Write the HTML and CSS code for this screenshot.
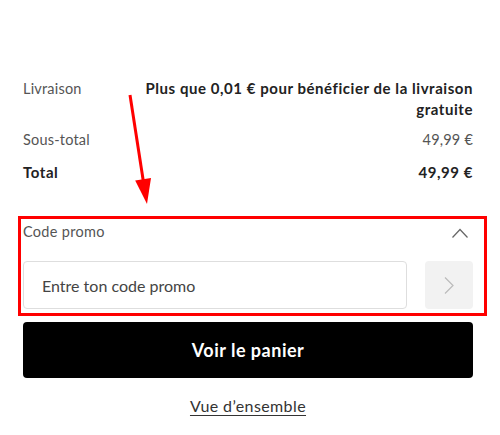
FILE: index.html
```html
<!DOCTYPE html>
<html lang="fr">
<head>
<meta charset="utf-8">
<title>Panier</title>
<link rel="stylesheet" href="styles.css">
</head>
<body>
<div class="page">
  <div class="summary">
    <div class="row row-delivery">
      <span class="label">Livraison</span>
      <span class="value strong">Plus que 0,01 € pour bénéficier de la livraison gratuite</span>
    </div>
    <div class="row row-subtotal">
      <span class="label">Sous-total</span>
      <span class="value">49,99 €</span>
    </div>
    <div class="row row-total">
      <span class="label strong">Total</span>
      <span class="value strong">49,99 €</span>
    </div>
  </div>

  <div class="promo">
    <div class="promo-head">
      <span class="promo-title">Code promo</span>
      <svg class="chev-up" width="16" height="10" viewBox="0 0 16 10"><polyline points="0.5,9.5 8,1.5 15.5,9.5" fill="none" stroke="#666" stroke-width="1.2"/></svg>
    </div>
    <div class="promo-form">
      <div class="promo-input">Entre ton code promo</div>
      <button class="promo-apply" type="button"><svg width="10" height="17" viewBox="0 0 10 17"><polyline points="1,0.5 9,8.5 1,16.5" fill="none" stroke="#bbb" stroke-width="1.2"/></svg></button>
    </div>
  </div>

  <button class="cta" type="button">Voir le panier</button>
  <div class="overview-wrap"><a class="overview" href="#">Vue d’ensemble</a></div>

  <div class="highlight"></div>
  <svg class="arrow" width="500" height="435" viewBox="0 0 500 435">
    <line x1="130" y1="95" x2="143.3" y2="181" stroke="#ff0000" stroke-width="3"/>
    <polygon points="135.2,180.5 151,178.1 147,204" fill="#ff0000"/>
  </svg>
</div>
</body>
</html>
```

FILE: styles.css
```css
html, body {
  margin: 0;
  padding: 0;
  background: #fff;
}
body {
  font-family: "Lato", "Liberation Sans", sans-serif;
  color: #222;
}
.page {
  position: relative;
  width: 500px;
  height: 435px;
  box-sizing: border-box;
  padding: 78px 27px 0 23px;
  overflow: hidden;
}
.summary {
  display: flex;
  flex-direction: column;
}
.row {
  display: flex;
  justify-content: space-between;
  align-items: flex-start;
  font-size: 14.5px;
  letter-spacing: 0.2px;
  line-height: 21px;
}
.row-subtotal { margin-top: 9px; }
.row-total { margin-top: 12px; }
.label {
  color: #555;
}
.value {
  color: #555;
  text-align: right;
}
.row-delivery .value {
  max-width: 334px;
}
.strong {
  font-size: 15px;
  font-weight: 700;
  letter-spacing: 0.55px;
  color: #222;
}
.promo {
  margin-top: 38px;
}
.promo-head {
  display: flex;
  justify-content: space-between;
  align-items: center;
  font-size: 14.5px;
  letter-spacing: 0.3px;
  line-height: 21px;
  color: #555;
}
.chev-up {
  margin-right: 5px;
  margin-top: 2px;
}
.promo-form {
  display: flex;
  gap: 18px;
  margin-top: 19px;
}
.promo-input {
  flex: 1;
  height: 48px;
  box-sizing: border-box;
  border: 1px solid #dedede;
  border-radius: 4px;
  padding-left: 18px;
  display: flex;
  align-items: center;
  font-size: 16px;
  color: #444;
}
.promo-apply {
  width: 48px;
  height: 48px;
  border: none;
  border-radius: 4px;
  background: #f2f2f2;
  padding: 0;
  display: flex;
  align-items: center;
  justify-content: center;
}
.cta {
  display: block;
  width: 100%;
  height: 56px;
  margin-top: 13px;
  border: none;
  border-radius: 4px;
  background: #000;
  color: #fff;
  font-family: "Lato", "Liberation Sans", sans-serif;
  font-size: 18px;
  font-weight: 700;
  letter-spacing: 0.5px;
}
.overview-wrap {
  margin-top: 18px;
  text-align: center;
  font-size: 16px;
  line-height: 20px;
}
.overview {
  color: #333;
  letter-spacing: 0.4px;
  text-decoration: underline;
  text-underline-offset: 3px;
}
.highlight {
  position: absolute;
  left: 18px;
  top: 216px;
  width: 469px;
  height: 100px;
  box-sizing: border-box;
  border: 3px solid #ff0000;
  pointer-events: none;
}
.arrow {
  position: absolute;
  left: 0;
  top: 0;
  pointer-events: none;
}
```
